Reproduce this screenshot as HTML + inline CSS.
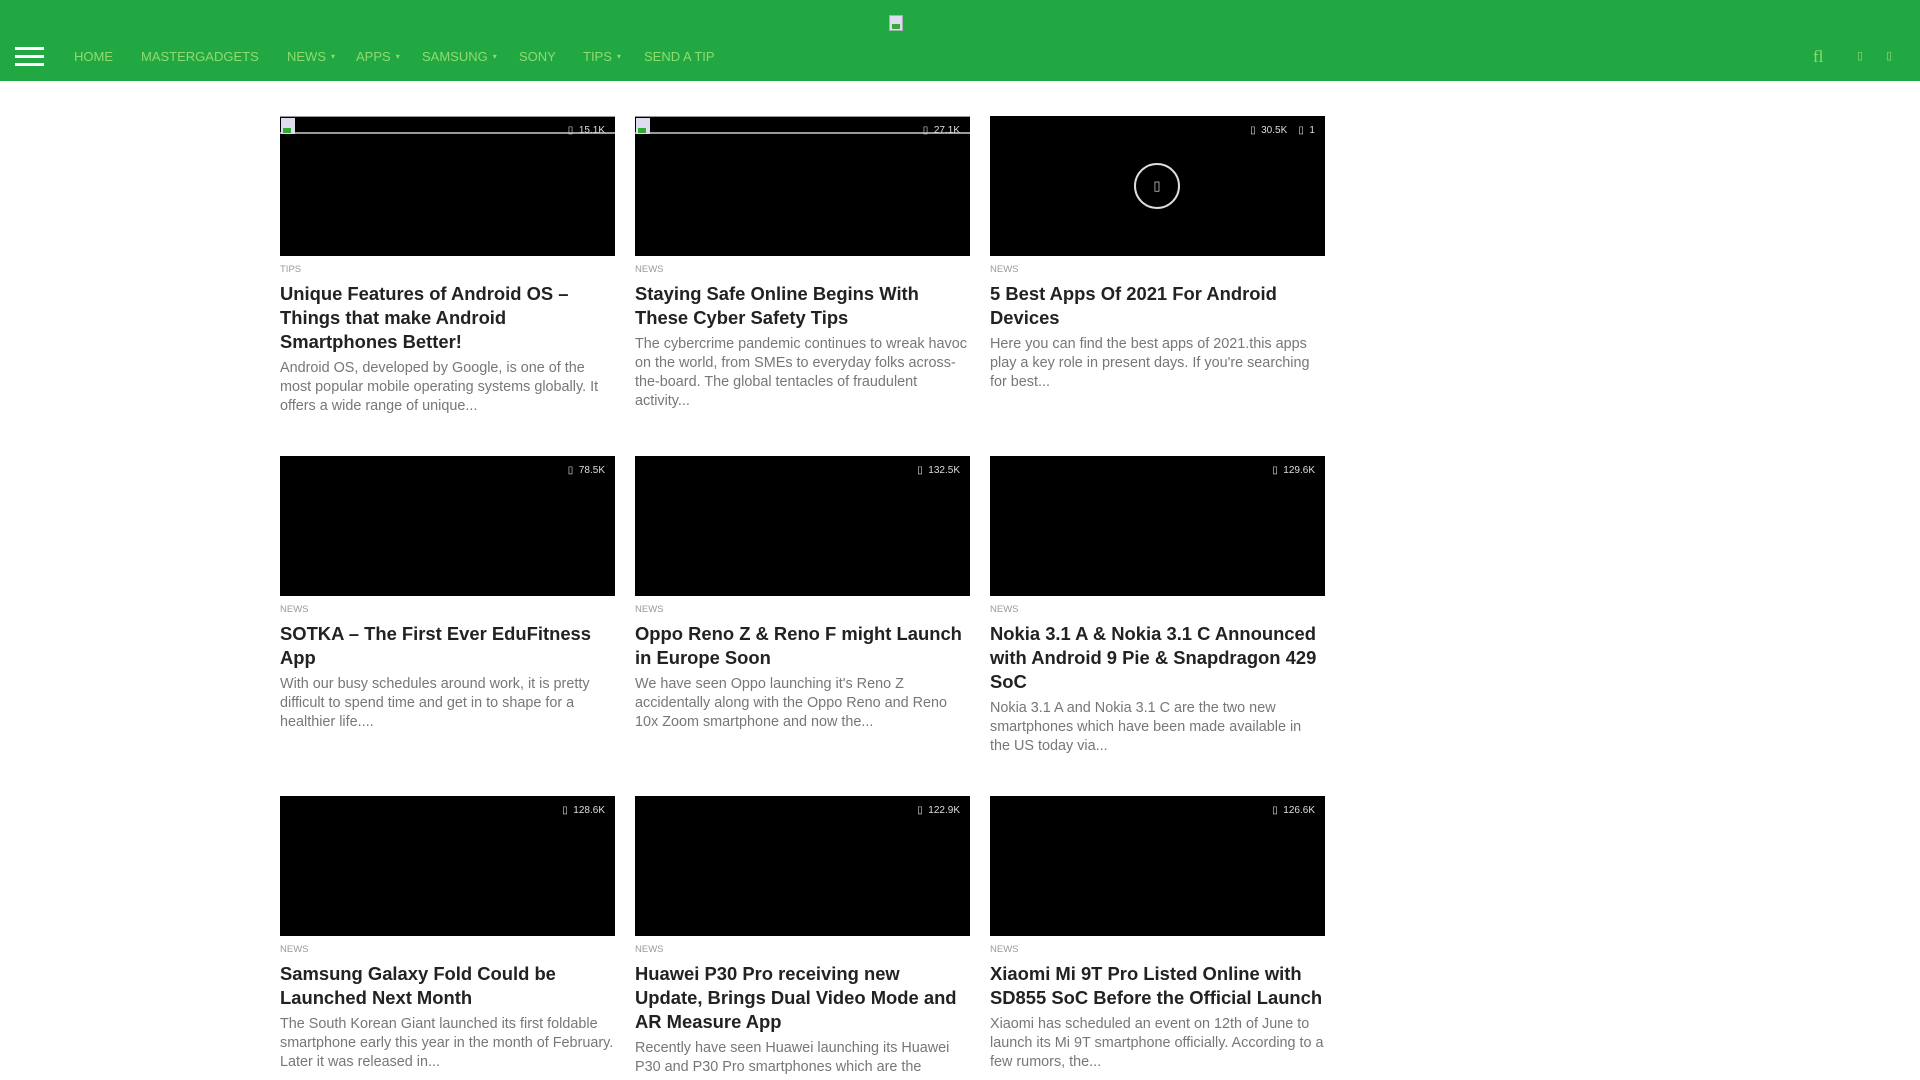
<!DOCTYPE html>
<html><head><meta charset="utf-8"><style>
*{margin:0;padding:0;box-sizing:border-box}
body{width:1920px;height:1080px;overflow:hidden;background:#fff;font-family:"Liberation Sans",Arial,sans-serif;position:relative}
.hdr{position:absolute;left:0;top:0;width:1920px;height:81px;background:#21a843}
.ham{position:absolute;left:15px;top:47px;width:29px;height:19px;border-top:3px solid #fff;border-bottom:3px solid #fff}
.ham:after{content:"";position:absolute;left:0;top:5px;width:29px;height:3px;background:#fff}
.nav{position:absolute;top:49px;font-size:13px;color:#8fdc6e;white-space:nowrap}
.nav.d:after{content:"▾";font-size:8px;margin-left:5px;vertical-align:2px}
.ico{position:absolute;color:#8fdc6e;font-size:14px}
.logo{position:absolute;left:889px;top:15px;width:14px;height:16px;background:#dde;border:1px solid #aab}
.logo:after{content:"";position:absolute;left:2px;bottom:1px;width:8px;height:5px;background:#3a3}
.card{position:absolute;width:335px}
.img{height:140px;background:#000;position:relative}
.bar{position:absolute;left:0;top:0;width:100%;height:18px;border-bottom:2px solid #999;border-top:1px solid #999}
.bi{position:absolute;left:1px;top:1px;width:14px;height:16px;background:#dde}
.bi:after{content:"";position:absolute;left:2px;bottom:1px;width:8px;height:5px;background:#3a3}
.vc{position:absolute;right:10px;top:9px;color:#ddd;font-size:10px}
.cat{font-size:9.5px;color:#999;margin-top:8px;height:14px}
.t{font-size:18.4px;font-weight:bold;color:#222;line-height:24px;margin-top:4px}
.e{font-size:14.4px;color:#777;line-height:19px;margin-top:5px}
.play{position:absolute;left:144px;top:47px;width:46px;height:46px;border:2px solid #ddd;border-radius:50%;color:#ccc;font-size:13px;text-align:center;line-height:42px}
</style></head><body>
<div class="hdr">
<div class="logo"></div>
<div class="ham"></div>
<span class="nav" style="left:74px">HOME</span>
<span class="nav" style="left:141px">MASTERGADGETS</span>
<span class="nav d" style="left:287px">NEWS</span>
<span class="nav d" style="left:356px">APPS</span>
<span class="nav d" style="left:422px">SAMSUNG</span>
<span class="nav" style="left:519px">SONY</span>
<span class="nav d" style="left:583px">TIPS</span>
<span class="nav" style="left:644px">SEND A TIP</span>
<span class="ico" style="left:1813px;top:47px;font-family:'Liberation Serif',serif;font-size:17px">fl</span>
<span class="ico" style="left:1857px;top:49px;font-size:11px">▯</span>
<span class="ico" style="left:1886px;top:49px;font-size:11px">▯</span>
</div>

<div class="card" style="left:280px;top:116px"><div class="img"><div class="bar"><div class="bi"></div></div><span class="vc">▯&nbsp; 15.1K</span></div><div class="cat">TIPS</div><div class="t">Unique Features of Android OS – Things that make Android Smartphones Better!</div><div class="e">Android OS, developed by Google, is one of the most popular mobile operating systems globally. It offers a wide range of unique...</div></div>
<div class="card" style="left:635px;top:116px"><div class="img"><div class="bar"><div class="bi"></div></div><span class="vc">▯&nbsp; 27.1K</span></div><div class="cat">NEWS</div><div class="t">Staying Safe Online Begins With These Cyber Safety Tips</div><div class="e">The cybercrime pandemic continues to wreak havoc on the world, from SMEs to everyday folks across-the-board. The global tentacles of fraudulent activity...</div></div>
<div class="card" style="left:990px;top:116px"><div class="img"><div class="play">▯</div><span class="vc">▯&nbsp; 30.5K &nbsp;&nbsp;&nbsp;▯&nbsp; 1</span></div><div class="cat">NEWS</div><div class="t">5 Best Apps Of 2021 For Android Devices</div><div class="e">Here you can find the best apps of 2021.this apps play a key role in present days. If you're searching for best...</div></div>

<div class="card" style="left:280px;top:456px"><div class="img"><span class="vc">▯&nbsp; 78.5K</span></div><div class="cat">NEWS</div><div class="t">SOTKA – The First Ever EduFitness App</div><div class="e">With our busy schedules around work, it is pretty difficult to spend time and get in to shape for a healthier life....</div></div>
<div class="card" style="left:635px;top:456px"><div class="img"><span class="vc">▯&nbsp; 132.5K</span></div><div class="cat">NEWS</div><div class="t">Oppo Reno Z &amp; Reno F might Launch in Europe Soon</div><div class="e">We have seen Oppo launching it's Reno Z accidentally along with the Oppo Reno and Reno 10x Zoom smartphone and now the...</div></div>
<div class="card" style="left:990px;top:456px"><div class="img"><span class="vc">▯&nbsp; 129.6K</span></div><div class="cat">NEWS</div><div class="t">Nokia 3.1 A &amp; Nokia 3.1 C Announced with Android 9 Pie &amp; Snapdragon 429 SoC</div><div class="e">Nokia 3.1 A and Nokia 3.1 C are the two new smartphones which have been made available in the US today via...</div></div>

<div class="card" style="left:280px;top:796px"><div class="img"><span class="vc">▯&nbsp; 128.6K</span></div><div class="cat">NEWS</div><div class="t">Samsung Galaxy Fold Could be Launched Next Month</div><div class="e">The South Korean Giant launched its first foldable smartphone early this year in the month of February. Later it was released in...</div></div>
<div class="card" style="left:635px;top:796px"><div class="img"><span class="vc">▯&nbsp; 122.9K</span></div><div class="cat">NEWS</div><div class="t">Huawei P30 Pro receiving new Update, Brings Dual Video Mode and AR Measure App</div><div class="e">Recently have seen Huawei launching its Huawei P30 and P30 Pro smartphones which are the</div></div>
<div class="card" style="left:990px;top:796px"><div class="img"><span class="vc">▯&nbsp; 126.6K</span></div><div class="cat">NEWS</div><div class="t">Xiaomi Mi 9T Pro Listed Online with SD855 SoC Before the Official Launch</div><div class="e">Xiaomi has scheduled an event on 12th of June to launch its Mi 9T smartphone officially. According to a few rumors, the...</div></div>
</body></html>
